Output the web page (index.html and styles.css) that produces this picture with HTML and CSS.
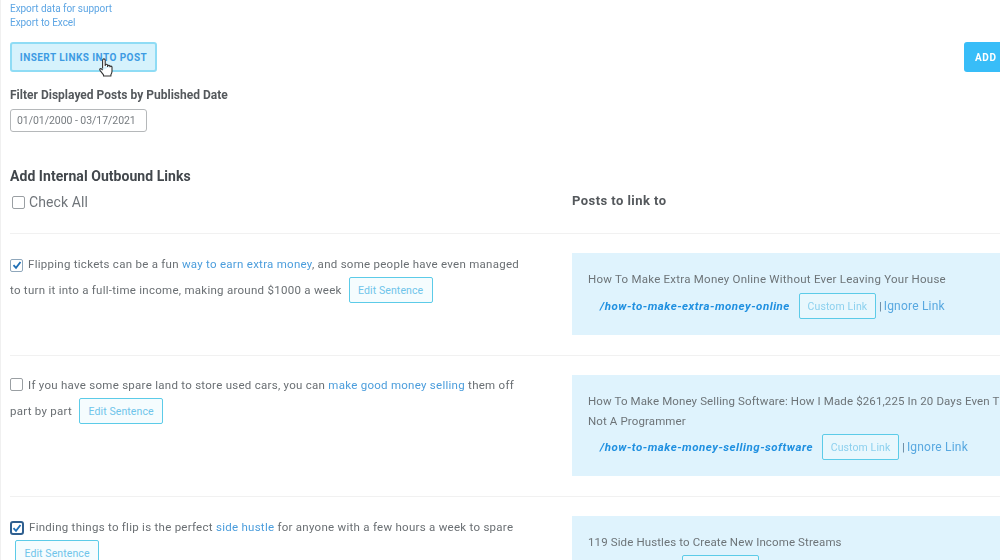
FILE: index.html
```html
<!DOCTYPE html>
<html lang="en">
<head>
<meta charset="utf-8">
<title>Add Internal Outbound Links</title>
<link rel="stylesheet" href="styles.css">
</head>
<body>
<main class="page">
  <div class="exports">
    <a class="export-link">Export data for support</a>
    <a class="export-link">Export to Excel</a>
  </div>
  <div class="actions">
    <div class="insert-wrap">
      <button class="btn-insert">INSERT LINKS INTO POST</button>
      <svg class="cursor" width="14" height="20" viewBox="0 0 14 20">
        <path d="M3.6 10.5V2.2a1.3 1.3 0 0 1 2.6 0V8m0-.6a1.2 1.2 0 0 1 2.4 0V9m0-.8a1.2 1.2 0 0 1 2.3 0v1.1m0-.5a1.1 1.1 0 0 1 2.1.3v4.1c0 1.500-.5 2.500-1.100 3.600v1.200H4.500v-1.200L1 12.300c-.8-1.300.8-2.300 1.700-1.200l.9 1.100" fill="#fff" stroke="#333" stroke-width="1.100" stroke-linejoin="round"/>
      </svg>
    </div>
    <button class="btn-add">ADD LINKS</button>
  </div>
  <label class="filter-label">Filter Displayed Posts by Published Date</label>
  <div class="date-input">01/01/2000 - 03/17/2021</div>
  <h2 class="section-title">Add Internal Outbound Links</h2>
  <div class="col-heads">
    <label class="check-all"><span class="box"></span>Check All</label>
    <h3 class="posts-title">Posts to link to</h3>
  </div>

  <section class="row">
    <div class="sentence">
      <p class="line"><span class="box box-sm checked"><svg width="10" height="10" viewBox="0 0 10 10"><path d="M1.500 5.200 4 7.800 8.500 2" fill="none" stroke="#1f6fb5" stroke-width="1.800"/></svg></span>Flipping tickets can be a fun <a class="anchor">way to earn extra money</a>, and some people have even managed</p>
      <p class="line">to turn it into a full-time income, making around $1000 a week<button class="btn-edit">Edit Sentence</button></p>
    </div>
    <div class="target">
      <p class="target-title">How To Make Extra Money Online Without Ever Leaving Your House</p>
      <p class="target-links"><b class="slug">/how-to-make-extra-money-online</b><button class="btn-custom">Custom Link</button><span class="sep">|</span><a class="ignore">Ignore Link</a></p>
    </div>
  </section>

  <section class="row">
    <div class="sentence sentence-high">
      <p class="line"><span class="box box-sm"></span>If you have some spare land to store used cars, you can <a class="anchor">make good money selling</a> them off</p>
      <p class="line">part by part<button class="btn-edit">Edit Sentence</button></p>
    </div>
    <div class="target">
      <p class="target-title target-title-tight">How To Make Money Selling Software: How I Made $261,225 In 20 Days Even Though I'm<br>Not A Programmer</p>
      <p class="target-links"><b class="slug">/how-to-make-money-selling-software</b><button class="btn-custom">Custom Link</button><span class="sep">|</span><a class="ignore">Ignore Link</a></p>
    </div>
  </section>

  <section class="row">
    <div class="sentence">
      <p class="line"><span class="box box-sm checked focus"><svg width="10" height="10" viewBox="0 0 10 10"><path d="M1.500 5.200 4 7.800 8.500 2" fill="none" stroke="#1f6fb5" stroke-width="1.800"/></svg></span>Finding things to flip is the perfect <a class="anchor">side hustle</a> for anyone with a few hours a week to spare</p>
      <p class="line"><button class="btn-edit btn-edit-first">Edit Sentence</button></p>
    </div>
    <div class="target">
      <p class="target-title target-title-tight">119 Side Hustles to Create New Income Streams</p>
      <p class="target-links"><b class="slug">/side-hustles</b><button class="btn-custom">Custom Link</button></p>
    </div>
  </section>
</main>
</body>
</html>
```

FILE: styles.css
```css
html, body {
  margin: 0;
  height: 560px;
  overflow: hidden;
  background: #fff;
}
body {
  font-family: Roboto, "Liberation Sans", sans-serif;
  color: #5f6468;
  border-left: 1px solid #f0f0f0;
}
p, h2, h3 { margin: 0; }
button { font-family: inherit; cursor: pointer; }
.page {
  width: 1200px;
  padding: 2px 0 0 9px;
  box-sizing: border-box;
  filter: blur(.3px);
}
.exports { display: flex; flex-direction: column; }
.export-link {
  font-size: 10px;
  line-height: 14px;
  letter-spacing: -.05px;
  color: #5ea6e4;
}
.actions {
  display: flex;
  gap: 807px;
  margin-top: 12px;
  align-items: flex-start;
}
.insert-wrap { position: relative; }
.btn-insert {
  display: block;
  width: 147px;
  height: 30px;
  padding: 0;
  border: 2px solid #8fdcf5;
  border-radius: 3px;
  background: #d6f2fc;
  color: #3d9be3;
  font-size: 10px;
  font-weight: 700;
  letter-spacing: .44px;
}
.cursor { position: absolute; left: 89px; top: 16px; }
.btn-add {
  width: 120px;
  height: 30px;
  padding: 0 0 0 11px;
  border: 0;
  border-radius: 3px;
  background: #38bdf8;
  color: #fff;
  font-size: 10px;
  font-weight: 700;
  letter-spacing: .62px;
  text-align: left;
}
.filter-label {
  display: block;
  margin-top: 16px;
  font-size: 12px;
  line-height: 14px;
  font-weight: 700;
  letter-spacing: .01px;
  color: #54585c;
}
.date-input {
  width: 137px;
  height: 23px;
  margin-top: 7px;
  box-sizing: border-box;
  padding-left: 6px;
  border: 1px solid #b5b8ba;
  border-radius: 3px;
  font-size: 10.500px;
  line-height: 21px;
  letter-spacing: -.05px;
  color: #777c80;
}
.section-title {
  margin-top: 36px;
  font-size: 14px;
  line-height: 16px;
  font-weight: 700;
  letter-spacing: .05px;
  color: #42474c;
}
.col-heads {
  display: grid;
  grid-template-columns: 562px 1fr;
  margin-top: 10px;
  height: 39px;
}
.check-all {
  display: flex;
  align-items: center;
  height: 16px;
  padding-left: 2px;
  font-size: 14px;
  letter-spacing: .1px;
  color: #70757a;
}
.posts-title {
  font-size: 13px;
  line-height: 14px;
  font-weight: 700;
  letter-spacing: .45px;
  color: #54585c;
}
.box {
  flex: none;
  width: 11px;
  height: 11px;
  margin-right: 4px;
  border: 1px solid #9a9fa3;
  border-radius: 2px;
  background: #fff;
}
.box-sm {
  display: inline-flex;
  align-items: center;
  justify-content: center;
  vertical-align: -2px;
  margin: 0 5px 0 0;
}
.checked { border-color: #8fa7bb; }
.focus { border: 2px solid #2f5f8f; width: 10px; height: 10px; border-radius: 3px; }
.row {
  display: grid;
  grid-template-columns: 562px 1fr;
  padding: 19px 0 20px;
  border-top: 1px solid #f1f1f1;
}
.sentence { width: 520px; margin-top: -1px; }
.sentence-high { margin-top: -2px; }
.line {
  min-height: 26px;
  font-size: 11.500px;
  line-height: 25px;
  letter-spacing: .27px;
  color: #6a6f73;
}
.anchor { color: #4b9ddc; }
.btn-edit {
  width: 84px;
  height: 26px;
  margin-left: 7px;
  padding: 0;
  border: 1px solid #5ccbe8;
  border-radius: 2px;
  background: #f5fcfe;
  color: #6fc4ea;
  font-size: 10.500px;
  letter-spacing: .1px;
  vertical-align: middle;
  position: relative;
  top: -1px;
}
.btn-edit-first { margin-left: 5px; }
.target {
  padding: 16px 0 16px 16px;
  background: #dff3fd;
}
.target-title {
  margin-bottom: 4px;
  font-size: 11.500px;
  line-height: 20px;
  letter-spacing: .24px;
  color: #6d7478;
}
.target-title-tight { margin-bottom: 3px; letter-spacing: .12px; }
.target-links {
  display: flex;
  align-items: center;
  padding-left: 12px;
  font-size: 11.500px;
}
.slug {
  font-style: italic;
  font-weight: 700;
  letter-spacing: .51px;
  color: #2090e0;
}
.btn-custom {
  height: 26px;
  width: 77px;
  margin-left: 9px;
  padding: 0;
  border: 1px solid #5ccbe8;
  border-radius: 2px;
  background: #e8f7fd;
  color: #8cd0ee;
  font-size: 10.500px;
  letter-spacing: .1px;
}
.sep { margin: 0 2px 0 3px; color: #5c7f99; }
.ignore { font-size: 12px; letter-spacing: .2px; color: #58a8e0; }
```
